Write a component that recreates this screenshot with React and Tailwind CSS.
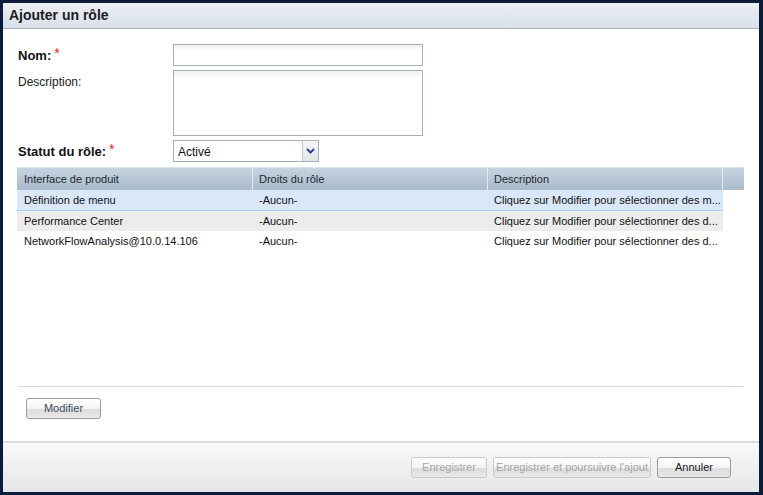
import React from 'react';

const font = { fontFamily: '"Liberation Sans", Arial, sans-serif' };

const rows = [
  { name: 'Définition de menu', rights: '-Aucun-', desc: 'Cliquez sur Modifier pour sélectionner des m...', selected: true },
  { name: 'Performance Center', rights: '-Aucun-', desc: 'Cliquez sur Modifier pour sélectionner des d...', alt: true },
  { name: 'NetworkFlowAnalysis@10.0.14.106', rights: '-Aucun-', desc: 'Cliquez sur Modifier pour sélectionner des d...' },
];

const Btn = ({ children, disabled, className = '' }) => (
  <button
    type="button"
    className={`h-[21px] rounded-[3px] border text-[11px] leading-none bg-[linear-gradient(#ffffff_0%,#f4f4f4_50%,#dcdcdc_51%,#e8e8e8_100%)] ${
      disabled ? 'border-[#c9c9c9] text-[#a6a6a6]' : 'border-[#9c9c9c] text-[#1a1a1a]'
    } ${className}`}
  >
    {children}
  </button>
);

const Star = () => <span className="text-[#e8231c] ml-[3px] text-[14px] font-normal leading-none">*</span>;

export default function App() {
  return (
    <div style={font} className="w-[763px] h-[495px] bg-[#0a1c3a] pt-[3px] pl-[3px] pr-[4px] pb-[3px]">
      <div className="h-full w-full bg-white flex flex-col">
        {/* title bar */}
        <div className="h-[26px] shrink-0 flex items-center pl-[6px] border-b border-[#aab1ba] bg-[linear-gradient(#eceff3,#d9e1ea)]">
          <span className="text-[14px] font-bold text-[#1c1c1c]">Ajouter un rôle</span>
        </div>

        <div className="flex-1 flex flex-col pl-[14px] pr-[14px]">
          {/* form */}
          <div className="pt-[15px] flex flex-col gap-[4px] pl-[1px]">
            <div className="flex">
              <div className="w-[155px] pt-[2px] text-[13px] font-bold text-[#111] flex items-start">
                Nom:<Star />
              </div>
              <div className="w-[250px] h-[22px] border border-[#a9b0ba] bg-[linear-gradient(#f0f0f0,#ffffff_30%)]" />
            </div>
            <div className="flex">
              <div className="w-[155px] pt-[3px] text-[12px] text-[#222]">Description:</div>
              <div className="w-[250px] h-[66px] border border-[#a9b0ba] bg-[linear-gradient(#f0f0f0,#ffffff_12%)]" />
            </div>
            <div className="flex">
              <div className="w-[155px] pt-[2px] text-[13px] font-bold text-[#111] flex items-start">
                Statut du rôle:<Star />
              </div>
              <div className="w-[146px] h-[22px] border border-[#a9b0ba] flex">
                <div className="flex-1 flex items-center pl-[4px] pt-[1px] text-[12px] text-[#111]">Activé</div>
                <div className="w-[16px] border-l border-[#c3c9d0] bg-[linear-gradient(#f5f6f8,#dfe3e8)] flex items-center justify-center">
                  <svg width="9" height="6" viewBox="0 0 9 6">
                    <path d="M1 1 L4.5 4.5 L8 1" fill="none" stroke="#2b4a8a" strokeWidth="2" />
                  </svg>
                </div>
              </div>
            </div>
          </div>

          {/* table */}
          <div className="mt-[5px] w-[727px] border-t border-[#d7e3ef]">
            <div className="flex h-[22px] bg-[linear-gradient(#c6d4e1,#a9bacb)] text-[11px] text-[#1e2730]">
              <div className="w-[236px] pl-[7px] flex items-center border-r border-[#e3eaf1]">Interface de produit</div>
              <div className="w-[235px] pl-[6px] flex items-center border-r border-[#e3eaf1]">Droits du rôle</div>
              <div className="w-[235px] pl-[6px] flex items-center border-r border-[#e3eaf1]">Description</div>
              <div className="flex-1" />
            </div>
            {rows.map((r) => (
              <div
                key={r.name}
                className={`flex w-[706px] text-[11px] text-[#111] items-center ${
                  r.selected ? 'h-[21px] bg-[#d9e7f8] border-b border-[#a9cdf2]' : r.alt ? 'bg-[#ececec] h-[20px]' : 'bg-white h-[20px]'
                }`}
              >
                <div className="w-[236px] pl-[7px] truncate">{r.name}</div>
                <div className="w-[235px] pl-[6px]">{r.rights}</div>
                <div className="w-[235px] pl-[6px] truncate">{r.desc}</div>
              </div>
            ))}
          </div>

          <div className="flex-1" />
          <div className="w-[726px] ml-[1px] border-t border-[#d3dde7]" />
          <div className="pt-[8px] pb-[22px] pl-[9px]">
            <Btn className="w-[75px] text-[#3a4a66]">Modifier</Btn>
          </div>
        </div>

        {/* footer */}
        <div className="h-[51px] shrink-0 border-t-2 border-[#d7dadf] bg-[linear-gradient(#f8f9fa,#e5e6e8)] flex items-start justify-end pt-[14px] pr-[28px] gap-[6px]">
          <Btn disabled className="w-[76px]">Enregistrer</Btn>
          <Btn disabled className="w-[158px]">Enregistrer et poursuivre l'ajout</Btn>
          <Btn className="w-[74px]">Annuler</Btn>
        </div>
      </div>
    </div>
  );
}
